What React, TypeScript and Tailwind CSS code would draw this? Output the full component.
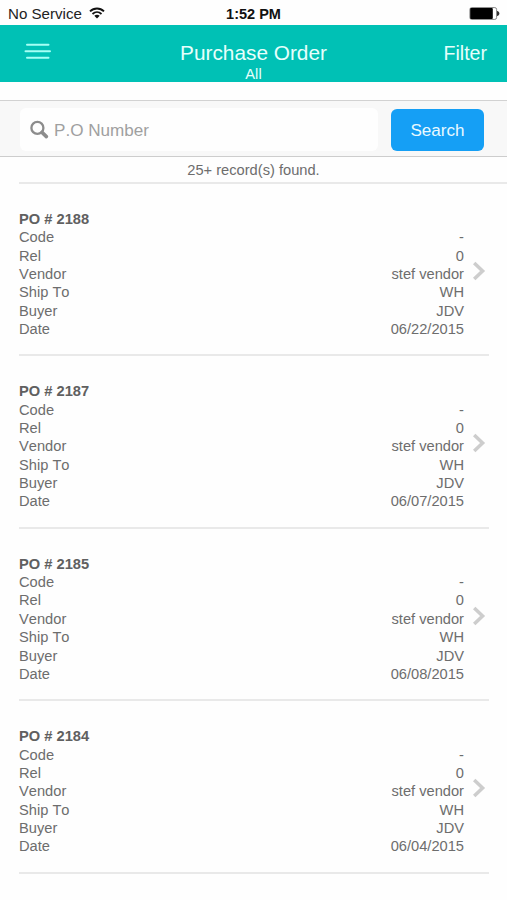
import { useState } from "react";

type Order = {
  number: string;
  code: string;
  rel: string;
  vendor: string;
  shipTo: string;
  buyer: string;
  date: string;
};

const BASE = {
  code: "-",
  rel: "0",
  vendor: "stef vendor",
  shipTo: "WH",
  buyer: "JDV",
};

const ORDERS: Order[] = [
  { ...BASE, number: "2188", date: "06/22/2015" },
  { ...BASE, number: "2187", date: "06/07/2015" },
  { ...BASE, number: "2185", date: "06/08/2015" },
  { ...BASE, number: "2184", date: "06/04/2015" },
];

function StatusBar() {
  return (
    <div className="grid h-[25px] grid-cols-3 items-center pt-[3px] pl-2 pr-[7px] text-[15.1px] leading-[22px] text-[#222]">
      <div className="flex items-center gap-[7px] whitespace-nowrap">
        No Service
        <svg width="16" height="12" viewBox="0 0 16 12" fill="none" className="-mt-[2px]">
          <path d="M1 4.4C5 0.5 11 0.5 15 4.4" stroke="#111" strokeWidth="1.9" />
          <path d="M3.5 7C6.2 4.5 9.8 4.5 12.5 7" stroke="#111" strokeWidth="1.8" />
          <path d="M8 11.5L5.3 8.8C6.9 7.4 9.1 7.4 10.7 8.8Z" fill="#111" />
        </svg>
      </div>
      <div className="pr-px text-center text-[14.5px] font-bold text-[#111]">1:52 PM</div>
      <div className="flex justify-end">
        <svg width="31" height="13" viewBox="0 0 31 13" className="-mt-[2px]">
          <rect x="0.9" y="0.6" width="26.7" height="11.8" rx="1.8" fill="#fff" stroke="#777" strokeWidth="0.9" />
          <rect x="1.2" y="1" width="22.6" height="11" rx="1" fill="#000" />
          <path d="M28 4C31.2 4.6 31.2 8.4 28 9Z" fill="#333" />
        </svg>
      </div>
    </div>
  );
}

function Header() {
  return (
    <header className="grid h-[56.5px] grid-cols-[1fr_auto_1fr] bg-[#00c1b5] text-[#e6fffc]">
      <button type="button" aria-label="Menu" className="self-start pt-[18px] pl-6">
        <svg width="28" height="18" viewBox="0 0 28 18" stroke="#a5fff5" strokeWidth="2" strokeLinecap="round">
          <path d="M3 1.8H24.5M1.5 8.2H26M3 14.8H24.5" />
        </svg>
      </button>
      <div className="pt-[15px] text-center">
        <h1 className="text-[20.8px] leading-[26px]">Purchase Order</h1>
        <div className="text-[14.7px] leading-4">All</div>
      </div>
      <button type="button" className="self-start justify-self-end pt-[15px] pr-5 text-[19.6px] leading-[26px]">
        Filter
      </button>
    </header>
  );
}

function SearchBar() {
  const [value, setValue] = useState("");

  return (
    <div className="mt-[18.5px] flex h-[57px] items-center border-t border-b border-t-[#d2d2d2] border-b-[#cdcdcd] bg-[#f8f8f8] pt-[2px] pl-5 pr-[23px]">
      <label className="flex h-[43px] w-[358px] items-center rounded-md bg-[#fefefe] pl-[9px]">
        <svg width="20" height="20" viewBox="0 0 20 20" fill="none" stroke="#8c8c8c">
          <circle cx="8.4" cy="7.9" r="6" strokeWidth="2.3" />
          <path d="M13 12.4L17.4 16.6" strokeWidth="3.6" strokeLinecap="round" />
        </svg>
        <input
          type="text"
          placeholder="P.O Number"
          value={value}
          onChange={(e) => setValue(e.target.value)}
          className="ml-[5px] min-w-0 flex-1 pt-[2px] text-[17.1px] outline-none placeholder:text-[#a0a0a0]"
        />
      </label>
      <button
        type="button"
        className="ml-[13px] h-[42px] w-[93px] rounded-[6px] bg-[#159ff5] pt-[2px] text-[17.1px] text-[#e8f9ff]"
      >
        Search
      </button>
    </div>
  );
}

function Field({ label, value }: { label: string; value: string }) {
  return (
    <div className="flex justify-between">
      <dt>{label}</dt>
      <dd>{value}</dd>
    </div>
  );
}

function OrderRow({ order }: { order: Order }) {
  return (
    <li className="ml-[19px] mr-[18px] flex h-[172.4px] items-start border-b-2 border-[#e9e9e9] pt-[26px]">
      <div className="w-[445px] leading-[18.35px]">
        <h2 className="font-bold text-[#606060]">PO # {order.number}</h2>
        <dl>
          <Field label="Code" value={order.code} />
          <Field label="Rel" value={order.rel} />
          <Field label="Vendor" value={order.vendor} />
          <Field label="Ship To" value={order.shipTo} />
          <Field label="Buyer" value={order.buyer} />
          <Field label="Date" value={order.date} />
        </dl>
      </div>
      <svg width="14" height="20" viewBox="0 0 14 20" fill="none" className="mt-[51px] ml-2">
        <path d="M2.2 2L10.6 10L2.2 18" stroke="#cdcdcd" strokeWidth="3.5" />
      </svg>
    </li>
  );
}

export default function App() {
  return (
    <div className="h-[900px] w-[507px] overflow-hidden bg-[#fefefe] font-['Liberation_Sans',Arial,sans-serif] text-[14.67px] text-[#6d6d6d] [font-kerning:none]">
      <StatusBar />
      <Header />
      <SearchBar />
      <div className="ml-[19px] h-[27px] border-b-2 border-[#e9e9e9] pr-[19px] text-center leading-[26px]">
        25+ record(s) found.
      </div>
      <ul>
        {ORDERS.map((order) => (
          <OrderRow key={order.number} order={order} />
        ))}
      </ul>
    </div>
  );
}
